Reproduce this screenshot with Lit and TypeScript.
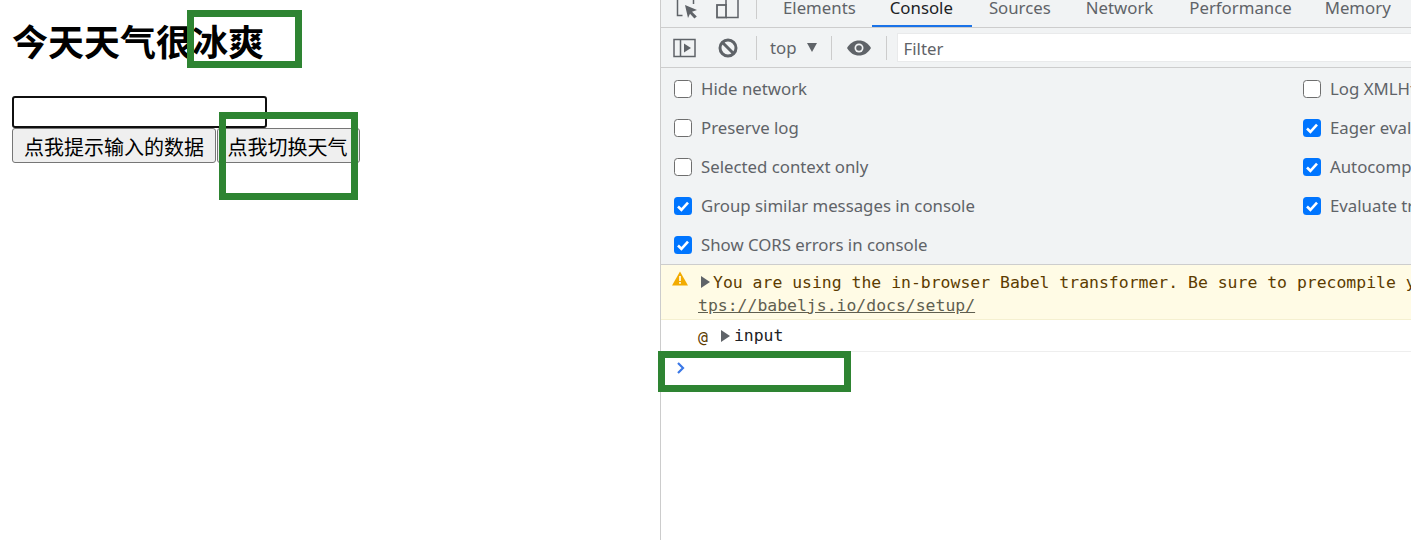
import { LitElement, html, css, svg } from "lit";
import { customElement } from "lit/decorators.js";

const CJK = css`"Liberation Sans", "Noto Sans CJK SC", sans-serif`;
const UI = css`"Noto Sans", "Open Sans", sans-serif`;
const MONO = css`"DejaVu Sans Mono", "Liberation Mono", monospace`;

@customElement("app-root")
export class AppRoot extends LitElement {
  static styles = css`
    :host { display: block; width: 1411px; height: 540px; overflow: hidden; position: relative; background: #fff; }
    .page { display: flex; height: 540px; }
    .left { width: 660px; flex: none; padding: 0 12px; box-sizing: border-box; font-family: ${CJK}; color: #000; }
    h1 { margin: 22px 0 30px; font-size: 36px; line-height: 44px; font-weight: 700; white-space: nowrap; }
    .input { display: block; width: 255px; height: 32px; box-sizing: border-box; border: 2px solid #101010; border-radius: 3px; background: #fff; }
    .btns { display: flex; gap: 1px; }
    .btn { height: 35px; box-sizing: border-box; border: 1px solid #767676; border-radius: 3px; background: #efefef; font: 20px/1 ${CJK}; color: #000; padding: 5px 0 0; text-align: center; }
    .b1 { width: 204px; }
    .b2 { width: 143px; padding-right: 2px; }
    .dev { flex: 1; min-width: 0; border-left: 1px solid #ccc; overflow: hidden; font-family: ${UI}; color: #5f6368; font-size: 16.8px; }
    .tabs { height: 27px; border-bottom: 1px solid #cdcdcd; background: #f1f3f4; display: flex; align-items: flex-start; position: relative; overflow: hidden; }
    .tabs svg { flex: none; }
    .sep { width: 1px; height: 24px; background: #ccc; flex: none; }
    .tabs .sep { height: 19px; }
    .tab { white-space: nowrap; line-height: 16px; }
    .tab.active { color: #202124; }
    .underline { position: absolute; left: 211px; bottom: 0; width: 100px; height: 2px; background: #1a73e8; }
    .tool { height: 39px; border-bottom: 1px solid #cdcdcd; background: #f1f3f4; display: flex; align-items: center; }
    .top { white-space: nowrap; }
    .arrow { width: 0; height: 0; border-left: 5px solid transparent; border-right: 5px solid transparent; border-top: 9px solid #5f6368; margin-left: 10px; }
    .filter { flex: 1; height: 29px; margin-left: 10px; background: #fff; border: 1px solid #e9eaeb; border-right: 0; box-sizing: border-box; padding-left: 6px; line-height: 30px; color: #5f6368; }
    .settings { height: 197px; border-bottom: 1px solid #cdcdcd; box-sizing: border-box; background: #f1f3f4; display: grid; grid-template-columns: 629px 1fr; padding: 1px 0 0 13px; }
    .col { display: flex; flex-direction: column; }
    .opt { height: 39px; display: flex; align-items: center; gap: 9px; white-space: nowrap; }
    .cb { width: 18px; height: 18px; box-sizing: border-box; border: 1.5px solid #6e6e6e; border-radius: 3.5px; background: #fff; flex: none; display: flex; }
    .cb.on { border: 0; background: #0075ff; }
    .warn { height: 55px; box-sizing: border-box; background: #fffbe5; border-bottom: 1px solid #f5f0d0; font: 16.44px/23px ${MONO}; color: #5c3b00; white-space: nowrap; position: relative; padding: 6px 0 0 37px; }
    .warn .tri { display: inline-block; margin: 0 3px 0 3px; }
    .warn a { color: #5f5f50; text-decoration: underline; }
    .warn-ic { position: absolute; left: 11px; top: 6px; }
    .stack { height: 32px; box-sizing: border-box; border-bottom: 1px solid #eee; font: 16.44px/32px ${MONO}; color: #202124; padding: 1px 0 0 37px; white-space: nowrap; display: flex; align-items: center; }
    .stack .at { color: #5c3b00; margin-right: 13px; margin-top: 3px; }
    .stack svg { margin-right: 4px; }
    .prompt { margin: 10px 0 0 15px; display: block; }
    .mark { position: absolute; box-sizing: border-box; border: 7px solid #2e8432; pointer-events: none; }
    .m1 { left: 187px; top: 10px; width: 115px; height: 58px; }
    .m2 { left: 219px; top: 112px; width: 139px; height: 88px; }
    .m3 { left: 658px; top: 351px; width: 193px; height: 41px; }
  `;

  private box(on: boolean) {
    return html`<span class="cb ${on ? "on" : ""}">${on ? svg`<svg width="18" height="18" viewBox="0 0 18 18"><path d="M4 9.500l3.400 3.300L14 5.600" fill="none" stroke="#fff" stroke-width="2.600"/></svg>` : ""}</span>`;
  }

  private opt(label: string, on = false) {
    return html`<div class="opt">${this.box(on)}<span>${label}</span></div>`;
  }

  render() {
    return html`
      <div class="page">
        <div class="left">
          <h1>今天天气很冰爽</h1>
          <div class="input"></div>
          <div class="btns">
            <button class="btn b1">点我提示输入的数据</button>
            <button class="btn b2">点我切换天气</button>
          </div>
        </div>
        <div class="dev">
          <div class="tabs">
            <svg style="margin-left:15px" width="24" height="20" viewBox="0 0 24 20"><path d="M1.500 0v15.500h5M17.500 0v4" fill="none" stroke="#5f6368" stroke-width="1.500"/><path d="M9 5l12 5-5 1.800 4.800 4.600-2.400 2.200-4.400-4.800L12 18z" fill="#5f6368"/></svg>
            <svg style="margin-left:15px" width="24" height="20" viewBox="0 0 24 20"><path d="M23 0v17.500H11M11 0v5" fill="none" stroke="#5f6368" stroke-width="1.500"/><rect x="2" y="5" width="9" height="12.500" fill="none" stroke="#5f6368" stroke-width="1.800"/></svg>
            <span class="sep" style="margin-left:17px"></span>
            <span class="tab" style="margin-left:26px">Elements</span>
            <span class="tab active" style="margin-left:34px">Console</span>
            <span class="tab" style="margin-left:36px">Sources</span>
            <span class="tab" style="margin-left:35px">Network</span>
            <span class="tab" style="margin-left:36px">Performance</span>
            <span class="tab" style="margin-left:33px">Memory</span>
            <span class="underline"></span>
          </div>
          <div class="tool">
            <svg style="margin-left:12px" width="23" height="20" viewBox="0 0 23 20"><rect x="1" y="1.500" width="21" height="17" fill="none" stroke="#5f6368" stroke-width="1.500"/><path d="M7.500 1.500v17" stroke="#5f6368" stroke-width="1.500"/><path d="M11 5.500l7 4.500-7 4.500z" fill="#5f6368"/></svg>
            <svg style="margin-left:22px" width="20" height="20" viewBox="0 0 20 20"><circle cx="10" cy="10" r="8" fill="none" stroke="#5f6368" stroke-width="3"/><path d="M4.500 4.500l11 11" stroke="#5f6368" stroke-width="3"/></svg>
            <span class="sep" style="margin-left:18px"></span>
            <span class="top" style="margin-left:13px">top</span>
            <span class="arrow"></span>
            <span class="sep" style="margin-left:14px"></span>
            <svg style="margin-left:15px" width="24" height="16" viewBox="0 0 24 16"><path d="M0 8C3 3 7 .5 12 .5S21 3 24 8c-3 5-7 7.500-12 7.500S3 13 0 8z" fill="#5f6368"/><circle cx="12" cy="8" r="4.500" fill="#f1f3f4"/><circle cx="12" cy="8" r="2.800" fill="#5f6368"/></svg>
            <span class="sep" style="margin-left:15px"></span>
            <div class="filter">Filter</div>
          </div>
          <div class="settings">
            <div class="col">
              ${this.opt("Hide network")}
              ${this.opt("Preserve log")}
              ${this.opt("Selected context only")}
              ${this.opt("Group similar messages in console", true)}
              ${this.opt("Show CORS errors in console", true)}
            </div>
            <div class="col">
              ${this.opt("Log XMLHttpRequests")}
              ${this.opt("Eager evaluation", true)}
              ${this.opt("Autocomplete from history", true)}
              ${this.opt("Evaluate triggers user activation", true)}
            </div>
          </div>
          <div class="warn">
            <svg class="warn-ic" width="16" height="15" viewBox="0 0 16 15"><path d="M8 .5L16 14.500H0z" fill="#f2ab00"/><path d="M7.200 5h1.600v5H7.200zM7.200 11h1.600v1.700H7.200z" fill="#fff"/></svg>
            <svg class="tri" width="9" height="12" viewBox="0 0 9 12"><path d="M0 0l9 6-9 6z" fill="#5f6368"/></svg>You are using the in-browser Babel transformer. Be sure to precompile your scripts for production - ht<br /><a>tps://babeljs.io/docs/setup/</a>
          </div>
          <div class="stack">
            <span class="at">@</span>
            <svg width="9" height="12" viewBox="0 0 9 12"><path d="M0 0l9 6-9 6z" fill="#5f6368"/></svg>
            <span>input</span>
          </div>
          <svg class="prompt" width="10" height="12" viewBox="0 0 10 12"><path d="M2 1l5 5-5 5" fill="none" stroke="#3b78e7" stroke-width="2.200"/></svg>
        </div>
      </div>
      <div class="mark m1"></div>
      <div class="mark m2"></div>
      <div class="mark m3"></div>
    `;
  }
}
